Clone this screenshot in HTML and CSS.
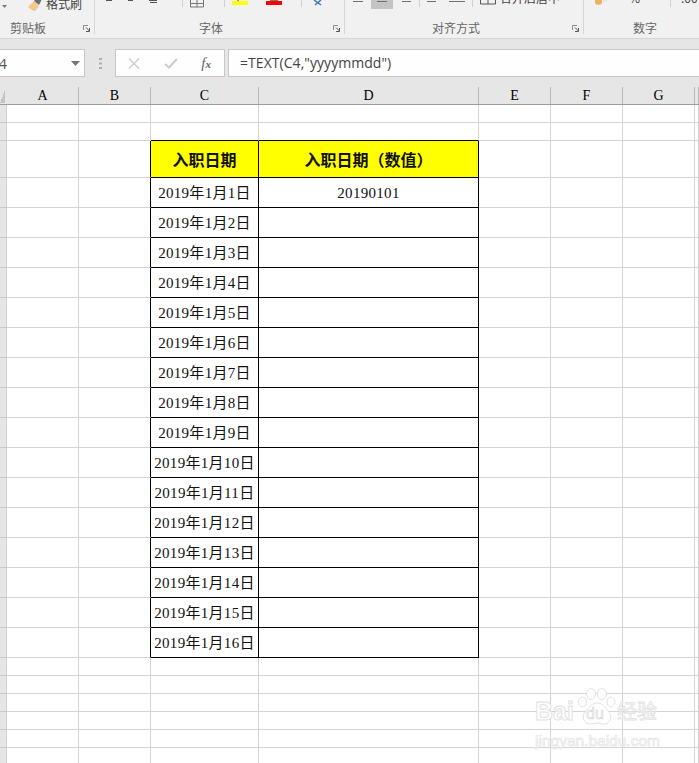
FILE: index.html
```html
<!DOCTYPE html>
<html lang="zh-CN">
<head>
<meta charset="utf-8">
<title>入职日期</title>
<link rel="stylesheet" href="styles.css">
</head>
<body>
<div class="app">
  <header class="ribbon">
    <section class="group g-clip">
      <div class="tools">
        <svg class="tool-arrow" width="8" height="8" viewBox="0 0 8 8"><path d="M2 5h5L4.500 8z" fill="#7a7a7a"/></svg>
        <svg class="brush" width="16" height="12" viewBox="0 0 16 12"><path d="M1 7 7 1l5 5-4 5-3-1z" fill="#f3c78c"/><path d="M7 1l2-2 6 0-3 6z" fill="#6d6d6d"/></svg>
        <span class="brush-text">格式刷</span>
      </div>
      <div class="label-row"><span class="label l-clip">剪贴板</span><svg class="launcher" width="7" height="7" viewBox="0 0 7 7"><path d="M.5 5V.5H5" fill="none" stroke="#8c8c8c"/><path d="M3 2.500 6.500 6M6.500 3v3.500H3" fill="none" stroke="#555"/></svg></div>
    </section>
    <section class="group g-font">
      <div class="tools">
        <svg width="249" height="12" viewBox="95 0 249 12">
          <path d="M106 .5h6M128 .5h5M149 .5h8M150 2.500h7" stroke="#555" fill="none"/>
          <path d="M182.500 0v7M224.500 0v7M301.500 0v7" stroke="#d0d0d0" fill="none"/>
          <path d="M190.500 0v7h13V0M197 0v7M190 3.500h13" stroke="#777" fill="none"/>
          <path d="M237 0h2v1h-2z" fill="#999"/><rect x="232" y="1" width="16" height="4" fill="#ffff00"/>
          <path d="M270 0h8v1h-8z" fill="#777"/><rect x="266" y="1" width="16" height="4" fill="#ff0000"/>
          <path d="M314 0l7 5M321 0l-6 5" stroke="#3f78b8" stroke-width="1.500" fill="none"/>
        </svg>
      </div>
      <div class="label-row"><span class="label l-font">字体</span><svg class="launcher" width="7" height="7" viewBox="0 0 7 7"><path d="M.5 5V.5H5" fill="none" stroke="#8c8c8c"/><path d="M3 2.500 6.500 6M6.500 3v3.500H3" fill="none" stroke="#555"/></svg></div>
    </section>
    <section class="group g-align">
      <div class="tools">
        <svg width="238" height="12" viewBox="345 0 238 12">
          <rect x="371" y="0" width="22" height="9" fill="#c4c4c4"/>
          <path d="M353 1.500h10M377 1.500h10M402 1.500h9M427 1.500h9M449 1.500h16" stroke="#707070" fill="none"/>
          <path d="M419.500 0v7M472.500 0v7" stroke="#d0d0d0" fill="none"/>
          <path d="M480.500 0v4h15V0M488 0v4" stroke="#555" fill="none"/>
          <text class="svg-clipped" x="500" y="3">合并后居中</text>
        </svg>
      </div>
      <div class="label-row"><span class="label l-align">对齐方式</span><svg class="launcher" width="7" height="7" viewBox="0 0 7 7"><path d="M.5 5V.5H5" fill="none" stroke="#8c8c8c"/><path d="M3 2.500 6.500 6M6.500 3v3.500H3" fill="none" stroke="#555"/></svg></div>
    </section>
    <section class="group g-num">
      <div class="tools">
        <svg width="115" height="12" viewBox="584 0 115 12">
          <path d="M595 0h7v3q-1 2-3.500 2T595 3z" fill="#eeb361"/><path d="M603 1h4" stroke="#ddd" fill="none"/>
          <text class="svg-clipped" x="629" y="3">%</text>
          <path d="M670.500 0v7" stroke="#d0d0d0" fill="none"/>
          <text class="svg-clipped" x="681" y="3">.00</text>
        </svg>
      </div>
      <div class="label-row"><span class="label l-num">数字</span></div>
    </section>
  </header>

  <div class="formula-bar">
    <div class="name-box"><span>C4</span><svg width="9" height="5" viewBox="0 0 9 5"><path d="M0 0h9L4.500 5z" fill="#777"/></svg></div>
    <svg class="grip" width="3" height="11" viewBox="0 0 3 11"><path d="M0 0h3v2H0zM0 4.500h3v2H0zM0 9h3v2H0z" fill="#b0b0b0"/></svg>
    <div class="fx-box">
      <svg width="12" height="11" viewBox="0 0 12 11"><path d="M1 .5 11 10.500M11 .5 1 10.500" stroke="#cfcfcf" stroke-width="1.500" fill="none"/></svg>
      <svg width="14" height="11" viewBox="0 0 14 11"><path d="M1 6l4 3.500L13 1" stroke="#cfcfcf" stroke-width="2.200" fill="none"/></svg>
      <span class="fx"><i>f</i><small>x</small></span>
    </div>
    <div class="formula">=TEXT(C4,"yyyymmdd")</div>
  </div>

  <table class="sheet">
    <colgroup><col class="c-rh"><col class="c-n"><col class="c-n"><col class="c-c"><col class="c-d"><col class="c-n"><col class="c-n"><col class="c-n"><col class="c-h"></colgroup>
    <thead>
      <tr class="heads"><th></th><th>A</th><th>B</th><th>C</th><th>D</th><th>E</th><th>F</th><th>G</th><th></th></tr>
    </thead>
    <tbody>
      <tr class="r18"><td></td><td></td><td></td><td></td><td></td><td></td><td></td><td></td><td></td></tr>
      <tr class="r18 above"><td></td><td></td><td></td><td></td><td></td><td></td><td></td><td></td><td></td></tr>
      <tr class="r37 d title"><td></td><td></td><td></td><td>入职日期</td><td>入职日期（数值）</td><td></td><td></td><td></td><td></td></tr>
      <tr class="r30 d"><td></td><td></td><td></td><td>2019年1月1日</td><td>20190101</td><td></td><td></td><td></td><td></td></tr>
      <tr class="r30 d"><td></td><td></td><td></td><td>2019年1月2日</td><td></td><td></td><td></td><td></td><td></td></tr>
      <tr class="r30 d"><td></td><td></td><td></td><td>2019年1月3日</td><td></td><td></td><td></td><td></td><td></td></tr>
      <tr class="r30 d"><td></td><td></td><td></td><td>2019年1月4日</td><td></td><td></td><td></td><td></td><td></td></tr>
      <tr class="r30 d"><td></td><td></td><td></td><td>2019年1月5日</td><td></td><td></td><td></td><td></td><td></td></tr>
      <tr class="r30 d"><td></td><td></td><td></td><td>2019年1月6日</td><td></td><td></td><td></td><td></td><td></td></tr>
      <tr class="r30 d"><td></td><td></td><td></td><td>2019年1月7日</td><td></td><td></td><td></td><td></td><td></td></tr>
      <tr class="r30 d"><td></td><td></td><td></td><td>2019年1月8日</td><td></td><td></td><td></td><td></td><td></td></tr>
      <tr class="r30 d"><td></td><td></td><td></td><td>2019年1月9日</td><td></td><td></td><td></td><td></td><td></td></tr>
      <tr class="r30 d"><td></td><td></td><td></td><td>2019年1月10日</td><td></td><td></td><td></td><td></td><td></td></tr>
      <tr class="r30 d"><td></td><td></td><td></td><td>2019年1月11日</td><td></td><td></td><td></td><td></td><td></td></tr>
      <tr class="r30 d"><td></td><td></td><td></td><td>2019年1月12日</td><td></td><td></td><td></td><td></td><td></td></tr>
      <tr class="r30 d"><td></td><td></td><td></td><td>2019年1月13日</td><td></td><td></td><td></td><td></td><td></td></tr>
      <tr class="r30 d"><td></td><td></td><td></td><td>2019年1月14日</td><td></td><td></td><td></td><td></td><td></td></tr>
      <tr class="r30 d"><td></td><td></td><td></td><td>2019年1月15日</td><td></td><td></td><td></td><td></td><td></td></tr>
      <tr class="r30 d"><td></td><td></td><td></td><td>2019年1月16日</td><td></td><td></td><td></td><td></td><td></td></tr>
      <tr class="r18"><td></td><td></td><td></td><td></td><td></td><td></td><td></td><td></td><td></td></tr>
      <tr class="r18"><td></td><td></td><td></td><td></td><td></td><td></td><td></td><td></td><td></td></tr>
      <tr class="r18"><td></td><td></td><td></td><td></td><td></td><td></td><td></td><td></td><td></td></tr>
      <tr class="r18"><td></td><td></td><td></td><td></td><td></td><td></td><td></td><td></td><td></td></tr>
      <tr class="r18"><td></td><td></td><td></td><td></td><td></td><td></td><td></td><td></td><td></td></tr>
      <tr class="r18"><td></td><td></td><td></td><td></td><td></td><td></td><td></td><td></td><td></td></tr>
    </tbody>
  </table>

  <div class="watermark">
    <div class="wm-top">
      <span class="wm-bai">Bai</span>
      <span class="wm-paw">
        <svg width="38" height="38" viewBox="0 0 38 38"><g fill="#fff" stroke="#e2e2e2" stroke-width="1"><ellipse cx="4.500" cy="14" rx="4" ry="5"/><ellipse cx="13" cy="6" rx="4.500" ry="5.500"/><ellipse cx="24" cy="6" rx="4.500" ry="5.500"/><ellipse cx="33" cy="14" rx="4" ry="5"/><path d="M19 15c6 0 8 5 12 9 4 5 1 12-5 12-3 0-5-1-7-1s-4 1-7 1c-6 0-9-7-5-12 4-4 6-9 12-9z"/></g></svg>
        <span class="wm-du">du</span>
      </span>
      <span class="wm-jy">经验</span>
    </div>
    <div class="wm-url">jingyan.baidu.com</div>
  </div>
</div>
</body>
</html>
```
FILE: styles.css
```css
* { box-sizing: border-box; }
html, body { margin: 0; padding: 0; background: #fff; }
.app {
  position: relative;
  width: 699px;
  height: 763px;
  overflow: hidden;
  font-family: "Noto Sans CJK SC", sans-serif;
}

/* ribbon */
.ribbon {
  display: flex;
  height: 39px;
  background: #f1f1f1;
  border-bottom: 1px solid #d6d6d6;
}
.group {
  display: flex;
  flex-direction: column;
  height: 34px;
  border-right: 1px solid #d6d6d6;
}
.g-clip { width: 95px; }
.g-font { width: 250px; }
.g-align { width: 239px; }
.g-num { flex: 1; border-right: 0; }
.tools {
  display: flex;
  height: 20px;
  overflow: hidden;
}
.tools > svg { display: block; flex: none; }
.brush { margin-left: 19px; }
.brush-text {
  margin: -5px 0 0 3px;
  font-size: 12px;
  line-height: 18px;
  color: #444;
}
.svg-clipped { font-size: 12px; fill: #444; font-family: "Noto Sans CJK SC", sans-serif; }
.label-row {
  display: flex;
  align-items: center;
  height: 14px;
  padding-top: 1px;
}
.label { font-size: 12px; line-height: 14px; color: #666; }
.l-clip { margin-left: 10px; }
.l-font { margin-left: 104px; }
.l-align { margin-left: 87px; }
.l-num { margin-left: 49px; }
.launcher { margin: 1px 4px 0 auto; }

/* formula bar */
.formula-bar {
  display: flex;
  align-items: flex-start;
  height: 38px;
  padding-top: 10px;
  background: #e6e6e6;
}
.name-box, .fx-box, .formula {
  display: flex;
  align-items: center;
  height: 28px;
  background: #fefefe;
  border: 1px solid #c8c8c8;
}
.name-box {
  justify-content: space-between;
  width: 97px;
  margin-left: -12px;
  padding: 0 4px 0 1px;
  border-left: 0;
  font: 15px "Open Sans", sans-serif;
  color: #555;
}
.grip { margin: 9px 12px 0 14px; flex: none; }
.fx-box {
  width: 110px;
  padding: 0 13px 0 12px;
  justify-content: space-between;
  margin-left: 1px;
}
.fx {
  font: italic 15px "Liberation Serif", serif;
  color: #666;
}
.fx small { font-size: 11px; font-weight: bold; }
.formula {
  flex: 1;
  margin: 0 -2px 0 3px;
  padding: 0 0 2px 11px;
  font: 14px "Open Sans", sans-serif;
  letter-spacing: .05px;
  color: #444;
}

/* sheet */
.sheet {
  table-layout: fixed;
  width: 699px;
  border-collapse: separate;
  border-spacing: 0;
  background: #fff;
  color: #000;
}
.c-rh { width: 7px; }
.c-n { width: 72px; }
.c-c { width: 108px; }
.c-d { width: 220px; }
.c-h { width: 4px; }
.sheet th, .sheet td { padding: 0; text-align: center; overflow: hidden; white-space: nowrap; }
.heads { height: 28px; background: #e6e6e6; }
.sheet .heads th {
  padding: 10px 1px 0 0;
  font: 14px/17px "Liberation Serif", serif;
  border-bottom: 1px solid #9c9c9c;
  background: linear-gradient(#b8b8b8, #b8b8b8) right bottom / 1px 17px no-repeat;
}
.sheet .heads th:first-child {
  background: linear-gradient(to bottom right, transparent 50%, #c4c4c4 50%) left 13px / 5px 13px no-repeat;
}
.sheet td {
  padding-top: 1px;
  border-right: 1px solid #d4d4d4;
  border-bottom: 1px solid #d4d4d4;
  font: 15px/20px "Liberation Serif", "Noto Sans CJK SC", serif;
  letter-spacing: .3px;
  color: #111;
}
.sheet td:first-child { background: #e6e6e6; border-right-color: #cfcfcf; border-bottom-color: #c8c8c8; }
.r18 { height: 18px; }
.r30 { height: 30px; }
.r37 { height: 37px; }
.above td:nth-child(4), .above td:nth-child(5) { border-bottom-color: #000; }
.d td:nth-child(3) { border-right-color: #000; }
.d td:nth-child(4), .d td:nth-child(5) { border-right-color: #000; border-bottom-color: #000; }
.sheet .title td:nth-child(4), .sheet .title td:nth-child(5) {
  padding-top: 0;
  background: #ffff00;
  font-size: 16px;
  letter-spacing: 0;
  font-weight: bold;
  font-family: "Noto Sans CJK SC", sans-serif;
}

/* watermark */
.watermark {
  position: absolute;
  left: 535px;
  top: 688px;
  width: 126px;
  pointer-events: none;
}
.wm-top { display: flex; align-items: flex-end; height: 38px; }
.wm-bai, .wm-du, .wm-jy, .wm-url {
  color: #fff;
  -webkit-text-stroke: 1px #e2e2e2;
  font-family: "Liberation Sans", "Noto Sans CJK SC", sans-serif;
}
.wm-bai { font-size: 25px; line-height: 30px; width: 43px; font-weight: bold; }
.wm-paw { position: relative; width: 38px; height: 38px; flex: none; }
.wm-paw svg { display: block; }
.wm-du {
  position: absolute;
  left: 8px;
  top: 17px;
  font-size: 16px;
  line-height: 18px;
  -webkit-text-stroke: .7px #d8d8d8;
}
.wm-jy { font-size: 20px; line-height: 28px; margin-left: 1px; -webkit-text-stroke: .8px #e2e2e2; }
.wm-url {
  margin-top: 7px;
  font-size: 15.500px;
  line-height: 16px;
  white-space: nowrap;
  -webkit-text-stroke: .7px #e4e4e4;
}
```
